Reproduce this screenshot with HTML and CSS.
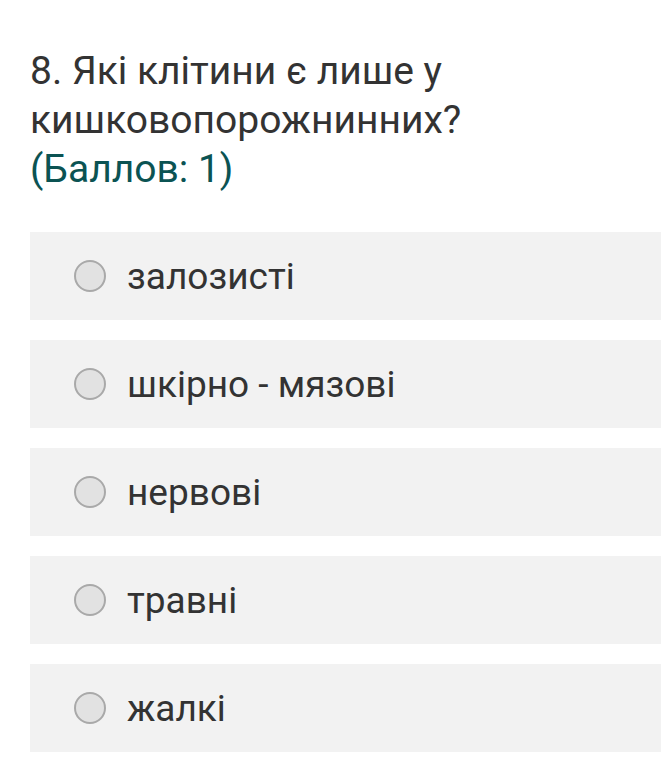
FILE: index.html
```html
<!DOCTYPE html>
<html>
<head>
<meta charset="utf-8">
<link rel="stylesheet" href="styles.css">
</head>
<body>
<div class="question">
  <div class="title">8. Які клітини є лише у кишковопорожнинних?</div>
  <div class="points">(Баллов: 1)</div>
  <div class="options">
    <label class="option"><span class="radio"></span><span class="text">залозисті</span></label>
    <label class="option"><span class="radio"></span><span class="text">шкірно - мязові</span></label>
    <label class="option"><span class="radio"></span><span class="text">нервові</span></label>
    <label class="option"><span class="radio"></span><span class="text">травні</span></label>
    <label class="option"><span class="radio"></span><span class="text">жалкі</span></label>
  </div>
</div>
</body>
</html>
```
FILE: styles.css
```css
html, body {
  margin: 0;
  padding: 0;
  background: #ffffff;
}
body {
  font-family: Roboto, "Noto Sans", sans-serif;
}
.question {
  padding: 47px 0 0 30px;
}
.title {
  font-size: 39px;
  line-height: 49px;
  color: #333333;
  width: 460px;
}
.points {
  font-size: 39px;
  line-height: 49px;
  color: #0b5353;
}
.options {
  margin-top: 38px;
  display: flex;
  flex-direction: column;
  gap: 20px;
}
.option {
  display: flex;
  align-items: center;
  height: 88px;
  background: #f2f2f2;
  padding-left: 44px;
}
.radio {
  width: 28px;
  height: 28px;
  border-radius: 50%;
  border: 2px solid #a9a9a9;
  background: #e2e2e2;
  flex: none;
}
.text {
  margin-left: 21px;
  font-size: 37px;
  color: #333333;
}
```
